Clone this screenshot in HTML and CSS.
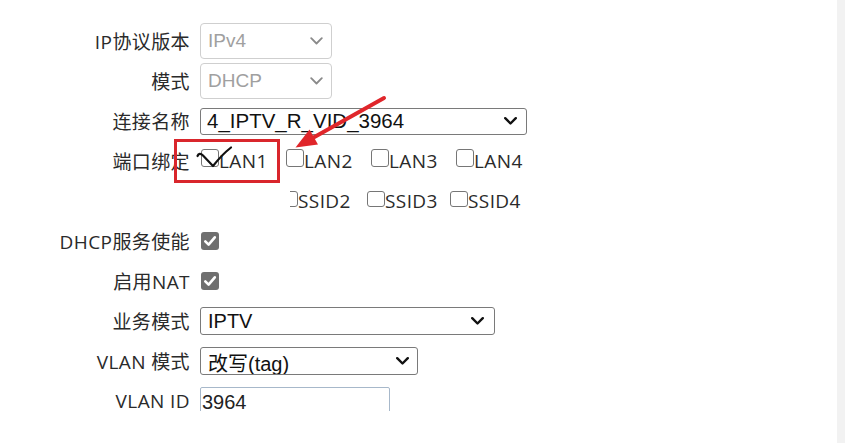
FILE: index.html
```html
<!DOCTYPE html>
<html lang="zh-CN">
<head>
<meta charset="utf-8">
<title>IPTV 连接设置</title>
<link rel="stylesheet" href="styles.css">
</head>
<body>
<div class="page">
  <main class="content">
    <form class="form">
      <div class="lbl">IP协议版本</div>
      <div class="ctl">
        <div class="sel sel-dis"><span>IPv4</span>
          <svg class="chev" width="13" height="8" viewBox="0 0 13 8"><polyline points="1.2,1.2 6.5,6.5 11.8,1.2"/></svg>
        </div>
      </div>

      <div class="lbl">模式</div>
      <div class="ctl">
        <div class="sel sel-dis"><span>DHCP</span>
          <svg class="chev" width="13" height="8" viewBox="0 0 13 8"><polyline points="1.2,1.2 6.5,6.5 11.8,1.2"/></svg>
        </div>
      </div>

      <div class="lbl">连接名称</div>
      <div class="ctl">
        <div class="sel sel-conn"><span>4_IPTV_R_VID_3964</span>
          <svg class="chev" width="13" height="8" viewBox="0 0 13 8"><polyline points="1.2,1.2 6.5,6.5 11.8,1.2"/></svg>
        </div>
      </div>

      <div class="lbl">端口绑定</div>
      <div class="ctl">
        <div class="cb-row">
          <label class="cb-item"><span class="box"></span>LAN1</label>
          <label class="cb-item"><span class="box"></span>LAN2</label>
          <label class="cb-item"><span class="box"></span>LAN3</label>
          <label class="cb-item"><span class="box"></span>LAN4</label>
        </div>
      </div>

      <div class="lbl"></div>
      <div class="ctl">
        <div class="cb-row cb-row2">
          <label class="cb-item ssid-first"><span class="box"></span>SSID2</label>
          <label class="cb-item ssid"><span class="box"></span>SSID3</label>
          <label class="cb-item ssid"><span class="box"></span>SSID4</label>
        </div>
      </div>

      <div class="lbl">DHCP服务使能</div>
      <div class="ctl">
        <span class="chk"><svg width="18" height="18" viewBox="0 0 18 18"><polyline points="4.3,9.3 7.6,12.6 13.8,5.3"/></svg></span>
      </div>

      <div class="lbl">启用NAT</div>
      <div class="ctl">
        <span class="chk"><svg width="18" height="18" viewBox="0 0 18 18"><polyline points="4.3,9.3 7.6,12.6 13.8,5.3"/></svg></span>
      </div>

      <div class="lbl">业务模式</div>
      <div class="ctl">
        <div class="sel sel-biz"><span>IPTV</span>
          <svg class="chev" width="13" height="8" viewBox="0 0 13 8"><polyline points="1.2,1.2 6.5,6.5 11.8,1.2"/></svg>
        </div>
      </div>

      <div class="lbl">VLAN 模式</div>
      <div class="ctl">
        <div class="sel sel-vlan"><span class="vlan-text">改写(tag)</span>
          <svg class="chev" width="13" height="8" viewBox="0 0 13 8"><polyline points="1.2,1.2 6.5,6.5 11.8,1.2"/></svg>
        </div>
      </div>

      <div class="lbl">VLAN ID</div>
      <div class="ctl ctl-top">
        <div class="vid-clip">
          <input class="vid" type="text" value="3964">
        </div>
      </div>
    </form>
  </main>
  <div class="scroll-strip"></div>

  <svg class="annot" width="845" height="443" viewBox="0 0 845 443">
    <rect class="mark-box" x="175.5" y="140.5" width="103" height="41"/>
    <path class="tick" d="M197.5,156 C198.5,153.5 200.5,153 203,155.5 L213,166 C218.5,159 224,153 231,147.5"/>
    <line class="arrow-line" x1="384" y1="98" x2="310" y2="139.5"/>
    <polygon class="arrow-head" points="295.5,147.5 318,144.5 309.5,129.5"/>
  </svg>
</div>
</body>
</html>
```

FILE: styles.css
```css
html, body {
  margin: 0;
  padding: 0;
  background: #fff;
}

body {
  font-family: "Open Sans", "Noto Sans CJK SC", sans-serif;
  font-size: 19px;
  letter-spacing: 0.4px;
  color: #2a2a2a;
}

.page {
  position: relative;
  display: flex;
  width: 845px;
  height: 443px;
  overflow: hidden;
}

.content {
  flex: 1;
  padding-top: 21px;
}

.scroll-strip {
  width: 8px;
  background: #f2f2f2;
}

.form {
  display: grid;
  grid-template-columns: 190px 1fr;
  column-gap: 10px;
  grid-auto-rows: 40px;
}

.lbl {
  display: flex;
  align-items: center;
  justify-content: flex-end;
  white-space: nowrap;
  color: #2a2a2a;
}

.ctl {
  display: flex;
  align-items: center;
}

.ctl-top {
  align-items: flex-start;
}

/* select look-alikes */
.sel {
  box-sizing: border-box;
  display: flex;
  align-items: center;
  justify-content: space-between;
  border: 1px solid #7a7a7a;
  border-radius: 3px;
  background: #fff;
  color: #111;
  font-family: "Liberation Sans", "Noto Sans CJK SC", sans-serif;
  font-size: 20px;
  letter-spacing: 0;
  padding: 0 8px 0 6px;
  overflow: hidden;
  white-space: nowrap;
}

.chev {
  flex: none;
}

.chev polyline {
  fill: none;
  stroke: #111;
  stroke-width: 2.4;
  stroke-linecap: round;
  stroke-linejoin: round;
}

.sel-dis {
  width: 132px;
  height: 36px;
  border-color: #cfcfcf;
  border-radius: 4px;
  color: #a0a0a0;
  font-size: 19px;
  padding-left: 7px;
  padding-right: 8px;
}

.sel-dis .chev polyline {
  stroke: #8a8a8a;
  stroke-width: 1.8;
}

.sel-conn {
  width: 327px;
  height: 27px;
  padding-left: 6px;
  padding-right: 9px;
  font-size: 20.5px;
}

.sel-biz {
  width: 295px;
  height: 28px;
  padding-left: 7px;
  padding-right: 10px;
}

.sel-vlan {
  width: 218px;
  height: 28px;
  padding-left: 7px;
  padding-right: 8px;
  align-items: flex-start;
}

.sel-vlan .chev {
  margin-top: 9px;
}

.vlan-text {
  line-height: 1;
  margin-top: 6px;
}

/* checkbox rows */
.cb-row {
  display: flex;
  align-items: center;
  margin-left: 1px;
}

.cb-item {
  display: flex;
  align-items: center;
  flex: none;
  width: 85px;
  white-space: nowrap;
  color: #2a2a2a;
}

.box {
  box-sizing: border-box;
  flex: none;
  width: 18px;
  height: 18px;
  border: 1px solid #767676;
  border-radius: 3px;
  background: #fff;
  margin-bottom: 6px;
}

.cb-row2 {
  margin-left: 90px;
  overflow: hidden;
}

.cb-row2 .box {
  height: 16px;
  margin-bottom: 5px;
}

.ssid-first {
  margin-left: -10px;
  width: 87px;
}

.ssid {
  width: 83px;
}

/* checked (gray) checkbox */
.chk {
  display: flex;
  width: 18px;
  height: 18px;
  margin-left: 1px;
  border-radius: 3px;
  background: #6f6f6f;
}

.chk polyline {
  fill: none;
  stroke: #fff;
  stroke-width: 2.6;
  stroke-linecap: round;
  stroke-linejoin: round;
}

/* VLAN ID input, bottom part hidden as in the capture */
.vid-clip {
  margin-top: 6px;
  height: 24px;
  overflow: hidden;
}

.vid {
  box-sizing: border-box;
  display: block;
  width: 190px;
  height: 30px;
  margin: 0;
  padding: 0 0 0 1px;
  border: 1px solid #a7b8ca;
  border-radius: 2px;
  font-family: "Liberation Sans", sans-serif;
  font-size: 20px;
  letter-spacing: 0;
  color: #222;
  background: #fff;
  outline: none;
}

/* annotation overlay */
.annot {
  position: absolute;
  left: 0;
  top: 0;
  pointer-events: none;
}

.mark-box {
  fill: none;
  stroke: #d9262c;
  stroke-width: 3;
}

.tick {
  fill: none;
  stroke: #111;
  stroke-width: 2.2;
  stroke-linecap: round;
  stroke-linejoin: round;
}

.arrow-line {
  stroke: #e0262b;
  stroke-width: 4;
  stroke-linecap: round;
}

.arrow-head {
  fill: #e0262b;
}
```
